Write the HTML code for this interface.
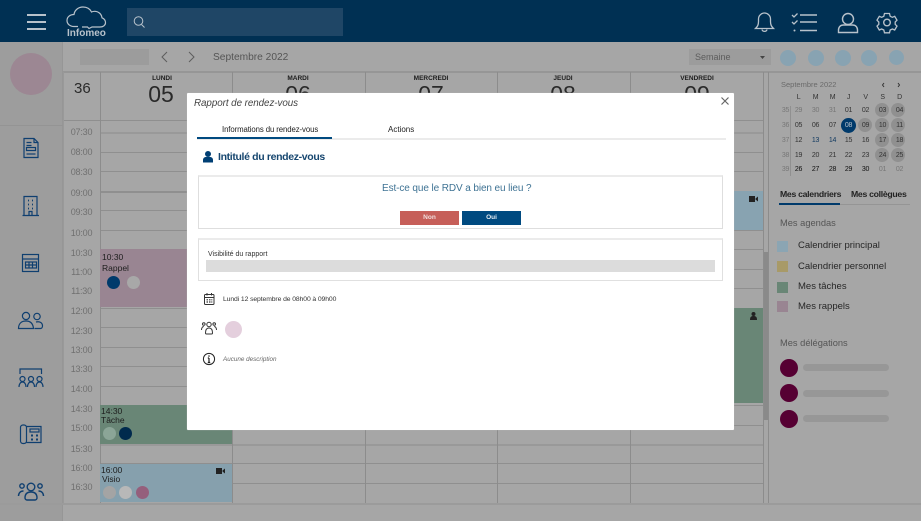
<!DOCTYPE html>
<html lang="fr">
<head>
<meta charset="utf-8">
<title>Rapport de rendez-vous</title>
<style>
*{box-sizing:border-box}
html,body{margin:0;padding:0}
body{width:921px;height:521px;overflow:hidden;position:relative;background:#a6a6a6;font-family:"Liberation Sans",sans-serif;color:#222}
.a{position:absolute}
.t{position:absolute;white-space:nowrap;line-height:1}
svg{position:absolute;overflow:visible}
.time{position:absolute;left:63px;width:37px;text-align:center;font-size:9px;color:#707070;line-height:10px;letter-spacing:-.2px}
.hl{position:absolute;left:100px;width:663px;height:1px;background:#8f8f8f}
.vl{position:absolute;top:72px;width:1px;height:431px;background:#8c8c8c}
.day{position:absolute;top:75px;font-size:6.5px;font-weight:bold;text-align:center;color:#1c1c1c;width:60px;line-height:8px}
.num{position:absolute;top:82px;font-size:23px;text-align:center;color:#2a2a2a;width:60px;line-height:24px}
.dot{position:absolute;border-radius:50%}
.cal{position:absolute;width:17px;text-align:center;font-size:7px;line-height:9px;color:#333;letter-spacing:-.3px}
.cbg{position:absolute;width:14px;height:14px;border-radius:50%;background:#909090}
.lg{position:absolute;left:777px;width:11px;height:11px}
.lt{position:absolute;left:798px;font-size:9.5px;line-height:11px;color:#272727;white-space:nowrap}
</style>
</head>
<body>
<!-- header -->
<div class="a" style="left:0;top:0;width:921px;height:42px;background:#003053"></div>
<div class="a" style="left:27px;top:14px;width:19px;height:2px;background:#b8c2cb"></div>
<div class="a" style="left:27px;top:21px;width:19px;height:2px;background:#b8c2cb"></div>
<div class="a" style="left:27px;top:28px;width:19px;height:2px;background:#b8c2cb"></div>
<div class="a" style="left:127px;top:8px;width:216px;height:28px;background:#1f4666"></div>
<svg style="left:0;top:0" width="921" height="42" fill="none" stroke="#b8c2cb" stroke-width="1.200">
<path d="M78 26.500H74c-4 0-7-2.500-7-6s3-6 7-6c.5-4 4-7.500 9-7.500 4 0 7 2 8.500 5 1-.5 2-.7 3-.7 4 0 7 2.700 7.500 6.500 2.500 1 3.500 3 3.500 5 0 2.500-2.500 4.200-5.500 4.200H92l-3 1.500-1.500-1.500H82"/>
<circle cx="138.500" cy="21" r="4.300" stroke-width="1"/><path d="M141.500 24.500l3 3" stroke-width="1"/>
<!-- bell -->
<path d="M755.500 28.500c2-2 3-3.500 3-7v-2.500c0-3.500 3-6 6-6s6 2.500 6 6v2.500c0 3.500 1 5 3 7z" stroke-width="1.300"/>
<path d="M762 29.500c.5 2.500 4.500 2.500 5 0" stroke-width="1.300"/>
<!-- tasks -->
<path d="M792 15l2 2 3.500-3.500M792 22l2 2 3.500-3.500" stroke-width="1.300"/>
<path d="M800 15h17M800 22h17M800 30.500h17" stroke-width="1.500"/>
<circle cx="794.500" cy="30.500" r="1" fill="#b8c2cb" stroke="none"/>
<!-- user -->
<circle cx="848" cy="19" r="5.500" stroke-width="1.400"/>
<path d="M838.500 32.500v-2.500c0-3 2-5 5-5h9c3 0 5 2 5 5v2.500z" stroke-width="1.400"/>
<!-- gear -->
<circle cx="887" cy="22.500" r="3.300" stroke-width="1.400"/>
<path d="M884.500 13.500h5l.7 2.800 2.200 1 2.300-1 2.300 3.900-1.800 1.800v2.300l1.800 1.800-2.300 3.900-2.300-1-2.200 1-.7 2.800h-5l-.7-2.800-2.200-1-2.300 1-2.300-3.900 1.800-1.800v-2.300l-1.800-1.800 2.300-3.900 2.300 1 2.200-1z" stroke-width="1.300"/>
</svg>
<div class="t" style="left:67px;top:29px;font-size:10px;font-weight:bold;color:#b8c2cb">Infomeo</div>

<!-- left rail -->
<div class="a" style="left:0;top:42px;width:63px;height:479px;background:#9d9d9d"></div>
<div class="a" style="left:62px;top:42px;width:1px;height:479px;background:#969696"></div>
<div class="a" style="left:0;top:125px;width:63px;height:1px;background:#949494"></div>
<div class="dot" style="left:10px;top:53px;width:42px;height:42px;background:#9c8793"></div>
<svg style="left:0;top:120px" width="63" height="400" fill="none" stroke="#0f3f70" stroke-width="1.200">
<!-- doc -->
<path d="M24 18.500h10l4 4v15H24z M34 18.500v4h4 M26.500 22.500h5 M26.500 25.500h5"/><rect x="26.500" y="27.500" width="9" height="3"/><path d="M26.500 34h9"/>
<!-- building -->
<path d="M24 96V76.500h13V96 M22.500 95.500h16.500"/>
<path d="M29 95.500v-4h3v4"/>
<path d="M28 80.500h1M32 80.500h1M28 84.500h1M32 84.500h1M28 88.500h1M32 88.500h1" stroke-width="1.700"/>
<!-- calendar -->
<rect x="22.500" y="134.500" width="16" height="17"/><path d="M22.500 139h16"/>
<rect x="25.500" y="142" width="11" height="6"/><path d="M29 142v6M32.500 142v6M25.500 145h11"/>
<!-- persons -->
<circle cx="26" cy="196" r="3.600"/><path d="M18.500 208.500c0-5 3-7.500 7.500-7.500s7 2.500 7.500 7.500z"/>
<circle cx="37" cy="196.500" r="3.200"/><path d="M36 202c4-1 6.500 1 6.500 4 0 1.500-1 2.500-2 2.500h-6"/>
<!-- meeting -->
<path d="M20 254v-5h21.500v5"/>
<circle cx="22.500" cy="259" r="2.500"/><circle cx="31" cy="259" r="2.500"/><circle cx="39.500" cy="259" r="2.500"/>
<path d="M19 267c0-3 1.500-5 3.500-5s3.500 2 3.500 5M27.500 267c0-3 1.500-5 3.500-5s3.500 2 3.500 5M36 267c0-3 1.500-5 3.500-5s3.500 2 3.500 5"/>
<!-- phone -->
<rect x="20.500" y="305" width="6" height="18.500" rx="2.500"/><path d="M26.500 306.500h14.500v16H26.500"/>
<rect x="30" y="309" width="9" height="3"/>
<path d="M31 315.500h2M36 315.500h2M31 319.500h2M36 319.500h2" stroke-width="2"/>
<!-- team -->
<circle cx="31" cy="367" r="3.800" stroke-width="1.400"/><path d="M25 378c0-4 2-6 6-6s6 2 6 6c0 1-1 2-2 2h-8c-1 0-2-1-2-2z" stroke-width="1.400"/>
<circle cx="22" cy="366" r="2.200" stroke-width="1.400"/><circle cx="40" cy="366" r="2.200" stroke-width="1.400"/>
<path d="M18.500 376c0-3 2-5 5-5M43.500 376c0-3-2-5-5-5" stroke-width="1.400"/>
</svg>

<!-- toolbar -->
<div class="a" style="left:63px;top:71px;width:858px;height:2px;background:#969696"></div>
<div class="a" style="left:80px;top:49px;width:69px;height:16px;background:#9c9c9c"></div>
<svg style="left:0;top:42px" width="200" height="30" fill="none" stroke="#5d5d5d"><path d="M167 10l-5 5 5 5M189 10l5 5-5 5"/></svg>
<div class="t" style="left:213px;top:52px;font-size:10.2px;color:#555;padding-top:.5px">Septembre 2022</div>
<div class="a" style="left:689px;top:49px;width:82px;height:16px;background:#9c9c9c"></div>
<div class="t" style="left:695px;top:53px;font-size:9px;color:#5d5d5d">Semaine</div>
<svg style="left:760px;top:56px" width="6" height="4"><path d="M0 0h5l-2.500 3z" fill="#444"/></svg>
<div class="dot" style="left:780px;top:50px;width:16px;height:16px;background:#88a3b2"></div>
<div class="dot" style="left:808px;top:50px;width:16px;height:16px;background:#88a3b2"></div>
<div class="dot" style="left:835px;top:50px;width:16px;height:16px;background:#88a3b2"></div>
<div class="dot" style="left:861px;top:50px;width:16px;height:16px;background:#88a3b2"></div>
<div class="dot" style="left:889px;top:50px;width:15px;height:15px;background:#88a3b2"></div>

<!-- grid header -->
<div class="t" style="left:74px;top:81px;font-size:15px;color:#2a2a2a">36</div>
<div class="day" style="left:132px">LUNDI</div><div class="num" style="left:131px">05</div>
<div class="day" style="left:268px">MARDI</div><div class="num" style="left:268px">06</div>
<div class="day" style="left:401px">MERCREDI</div><div class="num" style="left:401px">07</div>
<div class="day" style="left:533px">JEUDI</div><div class="num" style="left:533px">08</div>
<div class="day" style="left:667px">VENDREDI</div><div class="num" style="left:667px">09</div>
<div class="a" style="left:63px;top:120px;width:700px;height:1px;background:#8f8f8f"></div>

<!-- grid lines -->
<div class="hl" style="top:132px;height:2px;background:#999"></div><div class="hl" style="top:152px"></div><div class="hl" style="top:171px"></div><div class="hl" style="top:191px;height:2px"></div><div class="hl" style="top:210px"></div><div class="hl" style="top:230px"></div><div class="hl" style="top:249px"></div><div class="hl" style="top:269px"></div><div class="hl" style="top:288px"></div><div class="hl" style="top:308px"></div><div class="hl" style="top:327px"></div><div class="hl" style="top:347px"></div><div class="hl" style="top:366px"></div><div class="hl" style="top:386px"></div><div class="hl" style="top:405px"></div><div class="hl" style="top:425px"></div><div class="hl" style="top:444px;height:2px;background:#999"></div><div class="hl" style="top:463px"></div><div class="hl" style="top:483px"></div>
<div class="a" style="left:63px;top:72px;width:1px;height:431px;background:#999"></div>
<div class="vl" style="left:100px"></div><div class="vl" style="left:232px"></div><div class="vl" style="left:365px"></div><div class="vl" style="left:497px"></div><div class="vl" style="left:630px"></div><div class="vl" style="left:763px"></div><div class="vl" style="left:768px"></div>
<div class="a" style="left:0;top:503px;width:921px;height:2px;background:#9b9b9b"></div>

<div class="time" style="top:127px">07:30</div><div class="time" style="top:147px">08:00</div><div class="time" style="top:167px">08:30</div><div class="time" style="top:188px">09:00</div><div class="time" style="top:207px">09:30</div><div class="time" style="top:228px">10:00</div><div class="time" style="top:248px">10:30</div><div class="time" style="top:267px">11:00</div><div class="time" style="top:286px">11:30</div><div class="time" style="top:306px">12:00</div><div class="time" style="top:326px">12:30</div><div class="time" style="top:345px">13:00</div><div class="time" style="top:364px">13:30</div><div class="time" style="top:384px">14:00</div><div class="time" style="top:404px">14:30</div><div class="time" style="top:423px">15:00</div><div class="time" style="top:444px">15:30</div><div class="time" style="top:463px">16:00</div><div class="time" style="top:482px">16:30</div>

<!-- events -->
<div class="a" style="left:100px;top:249px;width:132px;height:58px;background:#998592"></div>
<div class="t" style="left:102px;top:253px;font-size:8.500px;color:#1d1d1d">10:30</div>
<div class="t" style="left:102px;top:264px;font-size:8.500px;color:#1d1d1d">Rappel</div>
<div class="dot" style="left:107px;top:276px;width:13px;height:13px;background:#003a6b"></div>
<div class="dot" style="left:127px;top:276px;width:13px;height:13px;background:#a8a8a8"></div>

<div class="a" style="left:100px;top:405px;width:132px;height:39px;background:#698676"></div>
<div class="t" style="left:101px;top:407px;font-size:8.500px;color:#1d1d1d">14:30</div>
<div class="t" style="left:101px;top:416px;font-size:8.500px;color:#1d1d1d">Tâche</div>
<div class="dot" style="left:103px;top:427px;width:13px;height:13px;background:#8ba597"></div>
<div class="dot" style="left:119px;top:427px;width:13px;height:13px;background:#002a4d"></div>

<div class="a" style="left:100px;top:464px;width:132px;height:38px;background:#86a0ad"></div>
<div class="t" style="left:101px;top:466px;font-size:8.500px;color:#1d1d1d">16:00</div>
<div class="t" style="left:102px;top:475px;font-size:8.500px;color:#1d1d1d">Visio</div>
<div class="dot" style="left:103px;top:486px;width:13px;height:13px;background:#a4a4a4"></div>
<div class="dot" style="left:119px;top:486px;width:13px;height:13px;background:#b8b8b8"></div>
<div class="dot" style="left:136px;top:486px;width:13px;height:13px;background:#955f7c"></div>
<svg style="left:216px;top:467px" width="12" height="8"><path d="M0 1h6v6H0zM6.500 3.500L9 1.500v5L6.500 4.500z" fill="#222"/></svg>

<div class="a" style="left:630px;top:191px;width:133px;height:39px;background:#88a3b1"></div>
<svg style="left:749px;top:195px" width="12" height="8"><path d="M0 1h6v6H0zM6.500 3.500L9 1.500v5L6.500 4.500z" fill="#222"/></svg>
<div class="a" style="left:630px;top:308px;width:133px;height:95px;background:#698676"></div>
<svg style="left:750px;top:312px" width="8" height="8" fill="#222"><circle cx="3.500" cy="2" r="2"/><path d="M0 8c0-3 1-4 3.500-4S7 5 7 8z"/></svg>

<!-- scrollbar -->
<div class="a" style="left:764px;top:252px;width:4px;height:168px;background:#8a8a8a"></div>

<!-- right panel -->
<div class="t" style="left:781px;top:81px;font-size:7.500px;color:#6a6a6a">Septembre 2022</div>
<svg style="left:880px;top:81px" width="24" height="8" fill="none" stroke="#333"><path d="M4 2L2.500 4 4 6M18 2l1.500 2L18 6"/></svg>
<div class="cbg" style="left:875px;top:103px"></div><div class="cbg" style="left:891px;top:103px"></div>
<div class="cbg" style="left:858px;top:118px"></div><div class="cbg" style="left:875px;top:118px"></div><div class="cbg" style="left:891px;top:118px"></div>
<div class="cbg" style="left:875px;top:133px"></div><div class="cbg" style="left:891px;top:133px"></div>
<div class="cbg" style="left:875px;top:148px"></div><div class="cbg" style="left:891px;top:148px"></div>
<div class="dot" style="left:841px;top:118px;width:15px;height:15px;background:#003a6b"></div>
<div class="a" style="left:790px;top:106px;width:1px;height:70px;background:#909090"></div>

<div class="cal" style="left:790px;top:93px">L</div><div class="cal" style="left:807px;top:93px">M</div><div class="cal" style="left:824px;top:93px">M</div><div class="cal" style="left:840px;top:93px">J</div><div class="cal" style="left:857px;top:93px">V</div><div class="cal" style="left:874px;top:93px">S</div><div class="cal" style="left:891px;top:93px">D</div>

<div class="cal" style="left:777px;top:106px;color:#777">35</div><div class="cal" style="left:790px;top:106px;color:#777">29</div><div class="cal" style="left:807px;top:106px;color:#777">30</div><div class="cal" style="left:824px;top:106px;color:#777">31</div><div class="cal" style="left:840px;top:106px">01</div><div class="cal" style="left:857px;top:106px">02</div><div class="cal" style="left:874px;top:106px">03</div><div class="cal" style="left:891px;top:106px">04</div>

<div class="cal" style="left:777px;top:121px;color:#777">36</div><div class="cal" style="left:790px;top:121px">05</div><div class="cal" style="left:807px;top:121px">06</div><div class="cal" style="left:824px;top:121px">07</div><div class="cal" style="left:840px;top:121px;color:#b5c0ca">08</div><div class="cal" style="left:857px;top:121px">09</div><div class="cal" style="left:874px;top:121px">10</div><div class="cal" style="left:891px;top:121px">11</div>

<div class="cal" style="left:777px;top:136px;color:#777">37</div><div class="cal" style="left:790px;top:136px">12</div><div class="cal" style="left:807px;top:136px;color:#123a60">13</div><div class="cal" style="left:824px;top:136px;color:#123a60">14</div><div class="cal" style="left:840px;top:136px">15</div><div class="cal" style="left:857px;top:136px">16</div><div class="cal" style="left:874px;top:136px">17</div><div class="cal" style="left:891px;top:136px">18</div>

<div class="cal" style="left:777px;top:151px;color:#777">38</div><div class="cal" style="left:790px;top:151px">19</div><div class="cal" style="left:807px;top:151px">20</div><div class="cal" style="left:824px;top:151px">21</div><div class="cal" style="left:840px;top:151px">22</div><div class="cal" style="left:857px;top:151px">23</div><div class="cal" style="left:874px;top:151px">24</div><div class="cal" style="left:891px;top:151px">25</div>

<div class="cal" style="left:777px;top:165px;color:#777">39</div><div class="cal" style="left:790px;top:165px;color:#111">26</div><div class="cal" style="left:807px;top:165px;color:#111">27</div><div class="cal" style="left:824px;top:165px;color:#111">28</div><div class="cal" style="left:840px;top:165px;color:#111">29</div><div class="cal" style="left:857px;top:165px;color:#111">30</div><div class="cal" style="left:874px;top:165px;color:#777">01</div><div class="cal" style="left:891px;top:165px;color:#777">02</div>

<div class="t" style="left:780px;top:190px;font-size:8.700px;font-weight:bold;color:#222;letter-spacing:-.3px">Mes calendriers</div>
<div class="t" style="left:851px;top:190px;font-size:8.700px;font-weight:bold;color:#222;letter-spacing:-.3px">Mes collègues</div>
<div class="a" style="left:779px;top:204px;width:131px;height:1px;background:#959595"></div>
<div class="a" style="left:779px;top:203px;width:61px;height:2px;background:#003a6b"></div>
<div class="t" style="left:780px;top:218.500px;font-size:9.300px;color:#555">Mes agendas</div>
<div class="lg" style="top:241px;background:#8ba5b3"></div><div class="lt" style="top:240px">Calendrier principal</div>
<div class="lg" style="top:261px;background:#a89a68"></div><div class="lt" style="top:261px">Calendrier personnel</div>
<div class="lg" style="top:282px;background:#698676"></div><div class="lt" style="top:281px">Mes tâches</div>
<div class="lg" style="top:301px;background:#998592"></div><div class="lt" style="top:301px">Mes rappels</div>
<div class="t" style="left:780px;top:339px;font-size:9.300px;color:#555">Mes délégations</div>
<div class="dot" style="left:780px;top:359px;width:18px;height:18px;background:#560033"></div>
<div class="dot" style="left:780px;top:384px;width:18px;height:18px;background:#560033"></div>
<div class="dot" style="left:780px;top:410px;width:18px;height:18px;background:#560033"></div>
<div class="a" style="left:803px;top:364px;width:86px;height:7px;border-radius:4px;background:#979797"></div>
<div class="a" style="left:803px;top:390px;width:86px;height:7px;border-radius:4px;background:#979797"></div>
<div class="a" style="left:803px;top:415px;width:86px;height:7px;border-radius:4px;background:#979797"></div>

<!-- modal -->
<div class="a" style="left:187px;top:93px;width:547px;height:337px;background:#fff;border-radius:1px;box-shadow:0 0 1px #bbb"></div>
<div class="t" style="left:194px;top:98.500px;font-size:9.800px;font-style:italic;color:#444;letter-spacing:-.05px">Rapport de rendez-vous</div>
<svg style="left:721px;top:97px" width="8" height="8" fill="none" stroke="#666" stroke-width="1.200"><path d="M.5.500l7 7M7.500.500l-7 7"/></svg>
<div class="t" style="left:222px;top:126px;font-size:7.800px;color:#222;letter-spacing:-.1px">Informations du rendez-vous</div>
<div class="t" style="left:388px;top:126px;font-size:8px;color:#222">Actions</div>
<div class="a" style="left:197px;top:138px;width:529px;height:2px;background:#ebebeb"></div>
<div class="a" style="left:197px;top:137px;width:135px;height:2px;background:#004a80"></div>
<svg style="left:203px;top:151px" width="11" height="12" fill="#003f74"><circle cx="5" cy="3" r="3"/><path d="M0 11.500V9c0-2 1.500-3 3-3h4c1.500 0 3 1 3 3v2.500z"/></svg>
<div class="t" style="left:218px;top:152px;font-size:10.500px;font-weight:bold;color:#16466f;letter-spacing:-.35px">Intitulé du rendez-vous</div>

<div class="a" style="left:198px;top:175px;width:525px;height:54px;border:1px solid #dedede;border-top:2px solid #ebebeb"></div>
<div class="t" style="left:382px;top:183.500px;font-size:10px;color:#3f7394;letter-spacing:-.1px">Est-ce que le RDV a bien eu lieu ?</div>
<div class="a" style="left:400px;top:211px;width:59px;height:14px;background:#c65f59;color:#f0dedd;font-size:6.500px;font-weight:bold;text-align:center;line-height:14px">Non</div>
<div class="a" style="left:462px;top:211px;width:59px;height:14px;background:#004a80;color:#e8eef3;font-size:6.500px;font-weight:bold;text-align:center;line-height:14px">Oui</div>

<div class="a" style="left:198px;top:238px;width:525px;height:43px;border:1px solid #e0e0e0;border-top:2px solid #ebebeb"></div>
<div class="t" style="left:208px;top:251px;font-size:7px;color:#333">Visibilité du rapport</div>
<div class="a" style="left:206px;top:260px;width:509px;height:12px;background:#dcdcdc"></div>

<svg style="left:203px;top:292px" width="13" height="14" fill="none" stroke="#333" stroke-width="1"><rect x="1.500" y="2.500" width="9.500" height="10" rx="1"/><path d="M1.500 5.500h9.500M4 1v2.500M8.500 1v2.500"/><path d="M3.500 7.800h1.500M6 7.800h1.500M8.300 7.800h1M3.500 10h1.500M6 10h1.500M8.300 10h1" stroke-width="1.200"/></svg>
<div class="t" style="left:223px;top:295px;font-size:6.800px;color:#333;letter-spacing:-.1px;padding-top:1.500px">Lundi 12 septembre de 08h00 à 09h00</div>

<svg style="left:201px;top:321px" width="16" height="14" fill="none" stroke="#333" stroke-width="1"><circle cx="8" cy="3.500" r="2.200"/><path d="M4.500 12c0-3 1-5 3.500-5s3.500 2 3.500 5c0 .6-.4 1-1 1h-5c-.6 0-1-.4-1-1z"/><circle cx="2.800" cy="3" r="1.300"/><circle cx="13.200" cy="3" r="1.300"/><path d="M.5 9c0-2 1-3.500 2.300-3.500M15.500 9c0-2-1-3.500-2.300-3.500"/></svg>
<div class="dot" style="left:225px;top:321px;width:17px;height:17px;background:#e4cfdd"></div>

<svg style="left:202px;top:352px" width="14" height="14" fill="none" stroke="#222" stroke-width="1"><circle cx="7" cy="7" r="5.600"/><path d="M7 6v4.500M5.800 6H7M5.800 10.500h2.400" stroke-width="1.200"/><circle cx="7" cy="4" r=".8" fill="#222" stroke="none"/></svg>
<div class="t" style="left:223px;top:355px;font-size:6.300px;font-style:italic;color:#666;padding-top:1.500px">Aucune description</div>
</body>
</html>
